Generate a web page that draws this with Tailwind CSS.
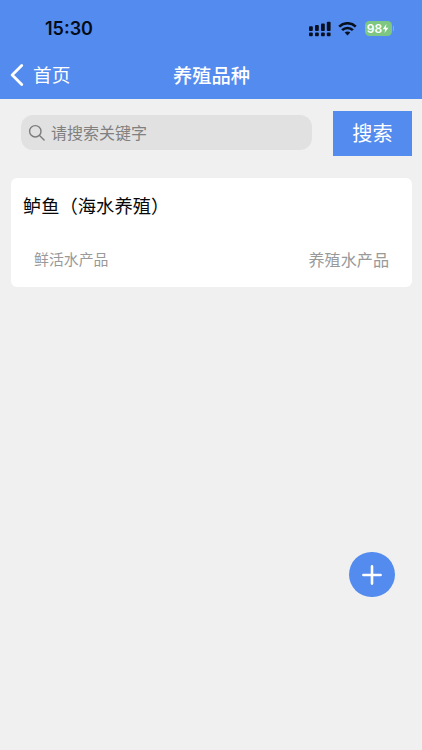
<!DOCTYPE html>
<html lang="zh-CN">
<head>
<meta charset="utf-8">
<meta name="viewport" content="width=device-width, initial-scale=1">
<title>养殖品种</title>
<script src="https://cdn.jsdelivr.net/npm/@tailwindcss/browser@4"></script>
</head>
<body class="h-[750px] overflow-hidden bg-[#f0f0f0] font-['Inter','Noto_Sans_CJK_SC',sans-serif]">
<header class="h-[99px] bg-[#548bee]">
  <div class="flex h-[50px] items-center justify-between pt-[7px] pr-[28px] pl-[45px]">
    <span class="text-[18px] leading-[22px] font-semibold text-[#050b18]">15:30</span>
    <div class="flex items-center">
      <svg class="h-[16px] w-[22px]" viewBox="0 0 22 16" fill="#07101f">
        <rect x="0" y="5.3" width="3.8" height="4.6" rx="1"/><rect x="6" y="4.1" width="3.8" height="5.8" rx="1"/><rect x="12" y="2.5" width="3.8" height="7.4" rx="1"/><rect x="17.8" y="0.8" width="3.8" height="9.1" rx="1"/>
        <rect x="0" y="11.6" width="3.8" height="3.6" rx="1"/><rect x="6" y="11.6" width="3.8" height="3.6" rx="1"/><rect x="12" y="11.6" width="3.8" height="3.6" rx="1"/><rect x="17.8" y="11.6" width="3.8" height="3.6" rx="1"/>
      </svg>
      <svg class="ml-[7px] h-[14px] w-[19px]" viewBox="0 0 19 14" fill="none" stroke="#07101f" stroke-width="2.6">
        <path d="M1.2 4.6a12 12 0 0 1 16.6 0"/><path d="M4.1 8.2a7.6 7.6 0 0 1 10.8 0"/><path d="M6.7 10.6a3.9 3.9 0 0 1 5.6 0L9.5 13.5Z" fill="#07101f" stroke="none"/>
      </svg>
      <div class="ml-[8px] flex h-[15px] w-[27px] items-center justify-center rounded-[4.5px] bg-[#7dc783] text-[12px] font-semibold text-white">98<svg class="h-[9px] w-[7px]" viewBox="0 0 7 9" fill="#fff"><path d="M4.4 0 .7 5.2h2.5L2.5 9l3.9-5.2H3.8Z"/></svg></div>
      <div class="ml-px h-[5px] w-[1.5px] rounded-r-full bg-[#7dc783]"></div>
    </div>
  </div>
  <nav class="grid h-[49px] grid-cols-[1fr_auto_1fr] items-center pr-[9px] pl-[10px] text-white">
    <div class="flex items-center">
      <svg class="h-[22px] w-[14px]" viewBox="0 0 14 22" fill="none" stroke="#fff" stroke-width="2.8" stroke-linecap="round" stroke-linejoin="round"><path d="M11.7 1.6 2.2 11l9.5 9.4"/></svg>
      <span class="ml-[9px] pt-[2px] text-[18.7px] leading-[26px]">首页</span>
    </div>
    <h1 class="pt-[2px] text-[19.3px] leading-[26px] font-medium">养殖品种</h1>
    <div></div>
  </nav>
</header>
<main>
  <div class="flex items-start pt-[12px] pr-[10px] pl-[21px]">
    <div class="mt-[4px] flex h-[35px] w-[291px] items-center rounded-[12px] bg-[#e1e1e1] pl-[7px] text-[#808080]">
      <svg class="h-[18px] w-[18px]" viewBox="0 0 18 18" fill="none" stroke="#7c7c7c" stroke-width="1.4" stroke-linecap="round"><circle cx="7.3" cy="7.3" r="5.7"/><path d="m11.5 11.5 4.6 4.5"/></svg>
      <span class="ml-[5px] text-[16px] leading-[22px]">请搜索关键字</span>
    </div>
    <button class="ml-auto h-[45px] w-[79px] bg-[#548bee] pt-px text-[20.2px] leading-[28px] text-white">搜索</button>
  </div>
  <section class="mr-[10px] ml-[11px] mt-[22px] h-[109px] rounded-[6px] bg-white pt-[15px]">
    <h2 class="pl-[12px] text-[18.3px] leading-[26px] text-[#080808]">鲈鱼（海水养殖）</h2>
    <div class="mt-[28px] flex items-center justify-between pr-[23px] pl-[23px] leading-[24px] text-[#999]">
      <span class="text-[14.9px]">鲜活水产品</span>
      <span class="pt-px text-[16.1px]">养殖水产品</span>
    </div>
  </section>
</main>
<button aria-label="添加" class="fixed top-[552px] left-[349px] flex h-[45px] w-[46px] items-center justify-center rounded-full bg-[#548bee]">
  <svg class="h-[20px] w-[20px]" viewBox="0 0 20 20" stroke="#fff" stroke-width="2.6" stroke-linecap="round"><path d="M10 1.4v17.2M1.4 10h17.2"/></svg>
</button>
</body>
</html>
